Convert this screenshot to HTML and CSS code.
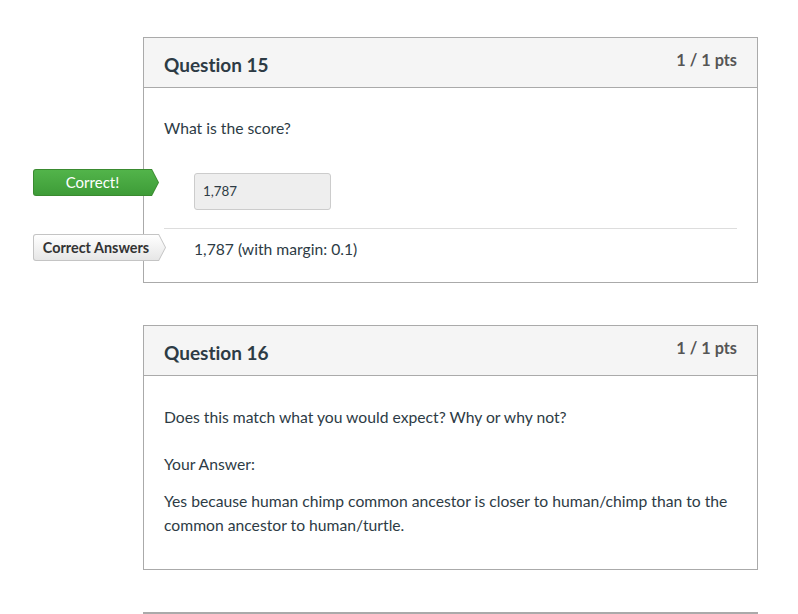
FILE: index.html
```html
<!DOCTYPE html>
<html>
<head>
<meta charset="utf-8">
<link rel="stylesheet" href="styles.css">
</head>
<body>
<div class="page">
  <div class="question">
    <div class="q-header">
      <span class="q-title">Question 15</span>
      <span class="q-pts">1 / 1 pts</span>
    </div>
    <div class="q-body">
      <p class="q-text">What is the score?</p>
      <div class="answers">
        <div class="answer answer-correct">
          <span class="badge badge-green">Correct!</span>
          <div class="answer-box">1,787</div>
        </div>
        <div class="answer answer-key">
          <span class="badge badge-gray">Correct Answers</span>
          <span class="answer-text">1,787 (with margin: 0.1)</span>
        </div>
      </div>
    </div>
  </div>

  <div class="question">
    <div class="q-header">
      <span class="q-title">Question 16</span>
      <span class="q-pts">1 / 1 pts</span>
    </div>
    <div class="q-body q-body-essay">
      <p class="q-text">Does this match what you would expect? Why or why not?</p>
      <p class="your-answer">Your Answer:</p>
      <p class="essay">Yes because human chimp common ancestor is closer to human/chimp than to the common ancestor to human/turtle.</p>
    </div>
  </div>

  <div class="question"></div>
</div>
</body>
</html>
```

FILE: styles.css
```css
html, body {
  margin: 0;
  padding: 0;
  background: #fff;
}
body {
  font-family: Lato, "Noto Sans", sans-serif;
  color: #2d3b45;
  font-variant-ligatures: none;
}
.page {
  padding: 37px 40px 0 143px;
  display: flex;
  flex-direction: column;
  gap: 42px;
}
.question {
  width: 613px;
  border: 1px solid #aaaaaa;
  background: #fff;
}
.q-header {
  height: 49px;
  background: #f5f5f5;
  border-bottom: 1px solid #aaaaaa;
  display: flex;
  justify-content: space-between;
  padding: 0 20px;
}
.q-title {
  font-size: 19px;
  font-weight: 700;
  line-height: 20px;
  margin-top: 17px;
}
.q-pts {
  font-size: 16.3px;
  font-weight: 700;
  color: #555;
  line-height: 20px;
  margin-top: 12px;
}
.q-body {
  padding: 30px 20px 22px;
}
.q-text {
  margin: 0;
  font-size: 15.7px;
  line-height: 21px;
}
.answers {
  margin-top: 34px;
}
.answer {
  position: relative;
  padding-left: 30px;
}
.answer-correct {
  padding-bottom: 18px;
  border-bottom: 1px solid #dddddd;
}
.answer-key {
  padding-top: 10px;
}
.answer-box {
  width: 127px;
  height: 35px;
  box-sizing: content-box;
  background: #eeeeee;
  border: 1px solid #cccccc;
  border-radius: 3px;
  font-size: 13.4px;
  line-height: 35px;
  padding-left: 8px;
}
.answer-text {
  font-size: 15.7px;
  line-height: 21px;
  display: block;
}
.badge {
  position: absolute;
  left: -131px;
  height: 27px;
  box-sizing: border-box;
  line-height: 27px;
  border-radius: 3px 0 0 3px;
  clip-path: polygon(0 0, calc(100% - 7px) 0, 100% 50%, calc(100% - 7px) 100%, 0 100%);
  padding-right: 7px;
  text-align: center;
  z-index: 1;
}
.badge::before {
  content: "";
  position: absolute;
  inset: 1px;
  border-radius: 2px 0 0 2px;
  clip-path: polygon(0 0, calc(100% - 6.5px) 0, 100% 50%, calc(100% - 6.5px) 100%, 0 100%);
  z-index: -1;
}
.badge-green {
  top: -4px;
  width: 126px;
  color: #fff;
  font-size: 15px;
  background: #3a8a30;
}
.badge-green::before {
  background: linear-gradient(#52b44a, #3e9c38);
}
.badge-gray {
  top: 5px;
  width: 133px;
  color: #333;
  font-size: 14.4px;
  font-weight: 700;
  background: #c4c4c4;
}
.badge-gray::before {
  background: linear-gradient(#ffffff, #e6e6e6);
}
.q-body-essay {
  padding: 31px 20px 32px;
}
.your-answer {
  margin: 26px 0 0;
  font-size: 15.7px;
  line-height: 21px;
}
.essay {
  margin: 14px 0 0;
  font-size: 15.7px;
  line-height: 24px;
}
```
